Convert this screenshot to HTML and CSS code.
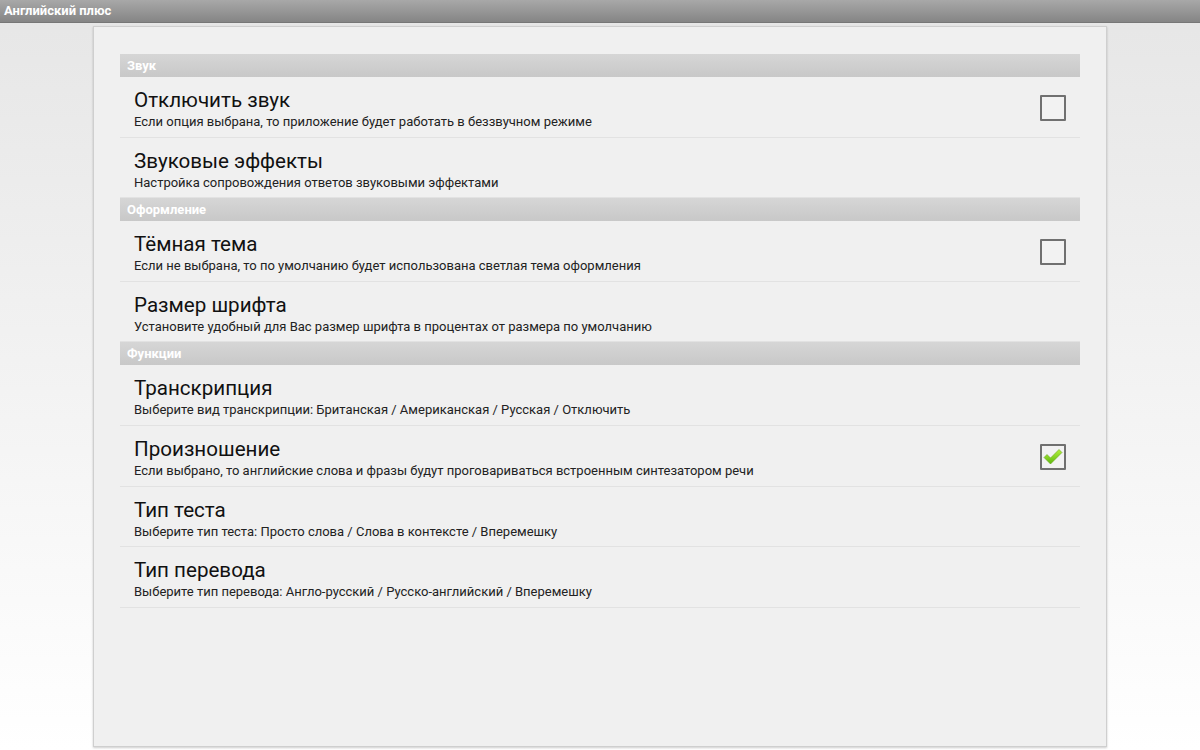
FILE: index.html
```html
<!DOCTYPE html>
<html lang="ru">
<head>
    <meta charset="UTF-8">
    <title>Английский плюс</title>
    <link rel="stylesheet" href="styles.css">
</head>
<body>
    <header class="titlebar">Английский плюс</header>
    <div class="page">
        <div class="panel">
            <div class="group">Звук</div>
            <div class="pref">
                <div class="pref-text">
                    <div class="pref-title">Отключить звук</div>
                    <div class="pref-sub">Если опция выбрана, то приложение будет работать в беззвучном режиме</div>
                </div>
                <span class="check"></span>
            </div>
            <div class="pref">
                <div class="pref-text">
                    <div class="pref-title">Звуковые эффекты</div>
                    <div class="pref-sub">Настройка сопровождения ответов звуковыми эффектами</div>
                </div>
            </div>

            <div class="group">Оформление</div>
            <div class="pref">
                <div class="pref-text">
                    <div class="pref-title">Тёмная тема</div>
                    <div class="pref-sub">Если не выбрана, то по умолчанию будет использована светлая тема оформления</div>
                </div>
                <span class="check"></span>
            </div>
            <div class="pref">
                <div class="pref-text">
                    <div class="pref-title">Размер шрифта</div>
                    <div class="pref-sub">Установите удобный для Вас размер шрифта в процентах от размера по умолчанию</div>
                </div>
            </div>

            <div class="group">Функции</div>
            <div class="pref">
                <div class="pref-text">
                    <div class="pref-title">Транскрипция</div>
                    <div class="pref-sub">Выберите вид транскрипции: Британская / Американская / Русская / Отключить</div>
                </div>
            </div>
            <div class="pref">
                <div class="pref-text">
                    <div class="pref-title">Произношение</div>
                    <div class="pref-sub">Если выбрано, то английские слова и фразы будут проговариваться встроенным синтезатором речи</div>
                </div>
                <span class="check checked">
                    <svg width="22" height="18" viewBox="0 0 22 18">
                        <defs>
                            <linearGradient id="tick" x1="0" y1="0" x2="0" y2="1">
                                <stop offset="0" stop-color="#b4f03c"/>
                                <stop offset="1" stop-color="#5eb80e"/>
                            </linearGradient>
                        </defs>
                        <path d="M2 9.5 L5 6.5 L8.5 10 L17 1.5 L20 4.5 L8.5 16 Z" fill="url(#tick)" stroke="#6aa51e" stroke-width="0.6" stroke-linejoin="round"/>
                    </svg>
                </span>
            </div>
            <div class="pref">
                <div class="pref-text">
                    <div class="pref-title">Тип теста</div>
                    <div class="pref-sub">Выберите тип теста: Просто слова / Слова в контексте / Вперемешку</div>
                </div>
            </div>
            <div class="pref">
                <div class="pref-text">
                    <div class="pref-title">Тип перевода</div>
                    <div class="pref-sub">Выберите тип перевода: Англо-русский / Русско-английский / Вперемешку</div>
                </div>
            </div>
        </div>
    </div>
</body>
</html>
```

FILE: styles.css
```css
* {
    margin: 0;
    padding: 0;
    box-sizing: border-box;
}
html, body {
    height: 100%;
}
body {
    font-family: Roboto, 'Liberation Sans', sans-serif;
    background: linear-gradient(#e6e6e6, #ffffff);
    color: #111;
    display: flex;
    flex-direction: column;
    overflow: hidden;
}
.titlebar {
    height: 23px;
    background: linear-gradient(#a8a8a8, #858585);
    border-bottom: 1px solid #777;
    color: #fff;
    font-weight: bold;
    font-size: 13px;
    line-height: 22px;
    padding-left: 4px;
    flex-shrink: 0;
}
.page {
    flex: 1;
    display: flex;
    justify-content: center;
    padding-top: 3px;
    padding-bottom: 3px;
}
.panel {
    width: 1014px;
    background: #f0f0f0;
    border: 1px solid #cfcfcf;
    box-shadow: 0 1px 2px rgba(0, 0, 0, 0.2);
    padding: 27px 26px 0 26px;
}
.group {
    height: 23px;
    line-height: 23px;
    background: linear-gradient(#d6d6d6, #c8c8c8);
    color: #fff;
    font-weight: bold;
    font-size: 13px;
    padding-left: 7px;
}
.pref {
    height: 60.6px;
    border-bottom: 1px solid #e2e2e2;
    display: flex;
    align-items: flex-start;
    padding: 10px 14px 0 14px;
}
.pref-text {
    flex: 1;
}
.pref-title {
    font-size: 20.6px;
    line-height: 26px;
    color: #111;
}
.pref-sub {
    font-size: 13px;
    line-height: 17px;
    color: #222;
}
.check {
    width: 26px;
    height: 26px;
    margin-top: 8px;
    border: 2px solid #707070;
    border-radius: 1px;
    display: flex;
    align-items: center;
    justify-content: center;
    background: #f2f2f2;
}
```
